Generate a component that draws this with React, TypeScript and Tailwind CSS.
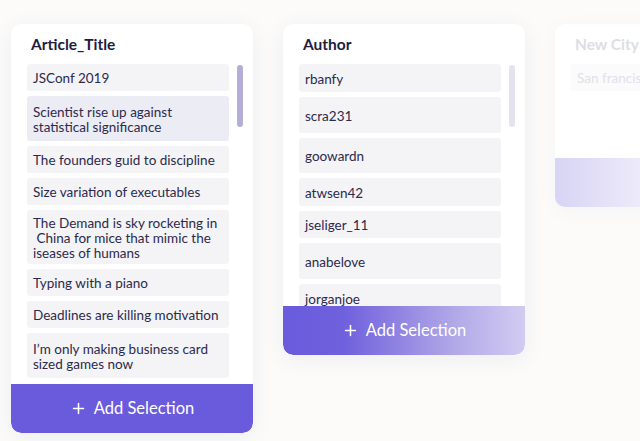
import { Plus } from "lucide-react";

type Item = { text: string; h: string; active?: boolean };

const articles: Item[] = [
    { text: "JSConf 2019", h: "h-[27px]" },
    { text: "Scientist rise up against statistical significance", h: "h-[45px]", active: true },
    { text: "The founders guid to discipline", h: "h-[27px]" },
    { text: "Size variation of executables", h: "h-[27px]" },
    { text: "The Demand is sky rocketing in \u00a0China for mice that mimic the iseases of humans", h: "h-[54px]" },
    { text: "Typing with a piano", h: "h-[27px]" },
    { text: "Deadlines are killing motivation", h: "h-[27px]" },
    { text: "I’m only making business card sized games now", h: "h-[45px]" },
];

const authors: Item[] = [
    { text: "rbanfy", h: "h-[28px]" },
    { text: "scra231", h: "h-[36px]" },
    { text: "goowardn", h: "h-[35px]" },
    { text: "atwsen42", h: "h-[28px]" },
    { text: "jseliger_11", h: "h-[27px]" },
    { text: "anabelove", h: "h-[36px]" },
    { text: "jorganjoe", h: "h-[28px]" },
];

function Row({ item }: { item: Item }) {
    return (
        <div
            className={`${item.h} shrink-0 flex items-center px-[6px] pt-[2px] rounded-[3px] text-[13.5px] leading-[15px] text-[#2c2a4c] ${
                item.active ? "bg-[#ececf5]" : "bg-[#f4f4f7]"
            }`}
        >
            <span>{item.text}</span>
        </div>
    );
}

function Column({
    title,
    items,
    listH,
    thumb,
    button,
}: {
    title: string;
    items: Item[];
    listH: string;
    thumb: string;
    button: string;
}) {
    return (
        <div className="w-[242px] shrink-0 bg-white rounded-[10px] shadow-[0_4px_24px_rgba(40,30,80,0.06)] overflow-hidden flex flex-col">
            <div className="pl-5 pt-[9px] h-[40px] text-[15.5px] font-bold text-[#1e1c3f]">{title}</div>
            <div className={`${listH} flex pl-4 pr-[10px] overflow-hidden`}>
                <div className="w-[202px] flex flex-col gap-[5px]">
                    {items.map((it) => (
                        <Row key={it.text} item={it} />
                    ))}
                </div>
                <div className="ml-2 w-[6px]">
                    <div className={`h-[62px] mt-[1px] rounded-full ${thumb}`} />
                </div>
            </div>
            <button
                className={`h-[49px] flex items-center justify-center gap-[7px] text-white text-[16.5px] rounded-b-[10px] ${button}`}
            >
                <Plus size={17} strokeWidth={2.2} />
                <span>Add Selection</span>
            </button>
        </div>
    );
}

export default function App() {
    return (
        <div
            className="w-[640px] h-[441px] overflow-hidden bg-[#fcfbfa] flex gap-[30px] pl-[11px] pt-[24px] items-start"
            style={{ fontFamily: "Lato, 'Open Sans', sans-serif" }}
        >
            <Column
                title="Article_Title"
                items={articles}
                listH="h-[320px]"
                thumb="bg-[#b5aed8]"
                button="bg-[#6a5bdc]"
            />
            <Column
                title="Author"
                items={authors}
                listH="h-[242px]"
                thumb="bg-[#e4e2f0]"
                button="bg-[linear-gradient(90deg,#6a5bdc_0%,#6f60dd_25%,#b0a7e7_70%,#d2ccf2_100%)]"
            />
            <div className="w-[242px] h-[183px] shrink-0 bg-white rounded-[10px] shadow-[0_4px_24px_rgba(40,30,80,0.03)] overflow-hidden flex flex-col">
                <div className="pl-5 pt-[9px] h-[40px] text-[15.5px] font-bold text-[#dedde5]">New City</div>
                <div className="h-[94px] pl-4">
                    <div className="w-[202px] h-[27px] flex items-center px-[6px] pt-[2px] bg-[#fbfbfc] text-[13.5px] text-[#e2e1e8]">
                        San francisco
                    </div>
                </div>
                <div className="h-[49px] bg-[linear-gradient(90deg,#d8d4f5_0%,#efedfb_40%,#ffffff_80%)]" />
            </div>
        </div>
    );
}
